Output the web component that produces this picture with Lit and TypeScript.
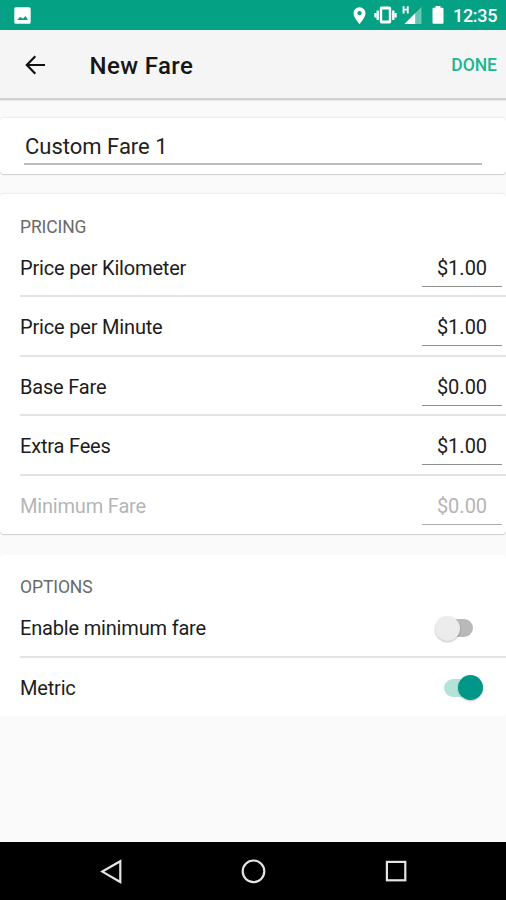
import { LitElement, html, css, svg } from "lit";
import { customElement, property } from "lit/decorators.js";
import { classMap } from "lit/directives/class-map.js";

@customElement("status-bar")
class StatusBar extends LitElement {
  static styles = css`
    :host { display: flex; height: 30px; background: #04a185; color: #fff; align-items: center; }
    svg { display: block; fill: #fff; flex: none; }
    .photo { margin-left: 14px; margin-top: 1px; }
    .gap { flex: 1; }
    .pin { margin-right: 8px; }
    .vibrate { margin-right: 5px; }
    .signal { margin-right: 10px; }
    .battery { margin-right: 9px; }
    .time { width: 44px; margin-right: 9px; font-size: 18px; font-weight: 500; line-height: 30px; padding-top: 2px; white-space: nowrap; letter-spacing: -0.3px; }
  `;
  render() {
    return html`
      <svg class="photo" width="17" height="17" viewBox="0 0 17 17">
        <path fill-rule="evenodd" d="M1.8.3h13.4q1.5 0 1.5 1.5v13.4q0 1.5-1.5 1.5H1.8Q.3 16.700.3 15.200V1.800Q.3.300 1.800.3ZM3.200 13H14L11.400 8.900 9 11.700 8 10.800 6 10.100Z" />
      </svg>
      <div class="gap"></div>
      <svg class="pin" width="13" height="17" viewBox="0 0 13 17">
        <path fill-rule="evenodd" d="M6.500.2A5.900 5.900 0 0 0 .5 6.200C.5 10.600 6.500 17 6.500 17S12.500 10.600 12.500 6.200A5.900 5.900 0 0 0 6.500.2ZM6.500 3.900A2.200 2.200 0 1 1 6.500 8.300 2.200 2.200 0 0 1 6.500 3.900Z" />
      </svg>
      <svg class="vibrate" width="23" height="18" viewBox="0 0 23 18">
        <path fill-rule="evenodd" d="M7.500 0.500h8q1.700 0 1.700 1.700v13.600q0 1.700-1.700 1.700h-8q-1.700 0-1.700-1.700V2.200q0-1.700 1.700-1.700ZM8.200 3.500v11h6.600v-11Z" />
        <path d="M2.500 4.500h2.400v9.500H2.500ZM18.100 4.500h2.400v9.500h-2.400ZM.3 7h2v4.500h-2ZM20.700 7h2v4.500h-2Z" />
      </svg>
      <svg class="signal" width="20" height="20" viewBox="0 0 20 20">
        <path opacity=".4" d="M19.500 2v17H2.500Z" />
        <path d="M13.200 8.300V19H2.500Z" />
        <path d="M.6 1.200h1.900v2.500h2.300V1.200h1.900v7.300H4.800V5.400H2.500v3.100H.6Z" />
      </svg>
      <svg class="battery" width="12" height="18" viewBox="0 0 12 18">
        <path d="M3.500 0h5v1.700h2q1 0 1 1v14q0 1-1 1h-9q-1 0-1-1v-14q0-1 1-1h2Z" />
      </svg>
      <span class="time">12:35</span>
    `;
  }
}

@customElement("app-bar")
class AppBar extends LitElement {
  static styles = css`
    :host { display: flex; height: 68px; background: #f5f5f5; align-items: center; border-bottom: 2px solid #d0d0d0; box-shadow: 0 1px 1px #e9e9e9; }
    svg { margin-left: 25px; margin-top: 1px; }
    .title { margin-left: 43.500px; padding-top: 3px; flex: 1; font-size: 24px; font-weight: 500; letter-spacing: 0.4px; color: #161616; }
    .done { margin-right: 9px; padding-top: 2px; font-size: 17.500px; font-weight: 500; color: #1db691; }
  `;
  render() {
    return html`
      <svg width="21" height="20" viewBox="0 0 21 20" fill="none" stroke="#111" stroke-width="2.200">
        <path d="M20 10H2.500M10.300 1.200 1.800 10l8.500 8.800" />
      </svg>
      <span class="title">New Fare</span>
      <span class="done">DONE</span>
    `;
  }
}

@customElement("fare-row")
class FareRow extends LitElement {
  @property() label = "";
  @property() value = "";
  @property({ type: Boolean }) off = false;
  @property({ type: Boolean }) last = false;
  static styles = css`
    :host { display: block; }
    .row { box-sizing: border-box; height: 59.500px; margin-left: 20px; display: flex; justify-content: space-between; align-items: center; border-bottom: 2px solid #e4e4e4; color: #1c1c1c; font-size: 20px; }
    .last { border-bottom-color: transparent; }
    .off { color: #b5b5b5; }
    .label { padding-top: 3px; white-space: nowrap; letter-spacing: -0.18px; }
    .field { box-sizing: border-box; width: 80px; height: 39px; margin: 10px 4px 0 0; padding-top: 1px; line-height: 38px; text-align: center; border-bottom: 1.500px solid #8f8f8f; align-self: flex-start; }
    .off .field { border-bottom-color: #adadad; }
  `;
  render() {
    return html`<div class=${classMap({ row: true, off: this.off, last: this.last })}>
      <span class="label">${this.label}</span>
      ${this.value ? html`<span class="field">${this.value}</span>` : html`<slot></slot>`}
    </div>`;
  }
}

@customElement("toggle-switch")
class ToggleSwitch extends LitElement {
  @property({ type: Boolean }) on = false;
  static styles = css`
    :host { display: block; width: 50px; margin-right: 22px; }
    .switch { display: flex; align-items: center; height: 26px; margin-top: 3px; }
    .track { width: 29px; height: 18px; margin-left: 10px; border-radius: 9px; background: #b9b9b9; }
    .thumb { flex: none; width: 25px; height: 25px; margin-left: -38px; border-radius: 50%; background: #ececec; box-shadow: 0 1px 2px rgba(0, 0, 0, 0.25); }
    .on .track { background: #b4e4d8; }
    .on .thumb { margin-left: -15px; background: #009688; }
  `;
  render() {
    return html`<div class=${classMap({ switch: true, on: this.on })}>
      <div class="track"></div><div class="thumb"></div>
    </div>`;
  }
}

@customElement("nav-bar")
class NavBar extends LitElement {
  static styles = css`
    :host { display: flex; height: 58px; background: #000; align-items: center; justify-content: center; gap: 118px; }
    svg { fill: none; stroke: #e4e4e4; stroke-width: 2.200; }
  `;
  render() {
    const shapes = [
      svg`<path d="M22.300 2.200v20.800L4.300 12.600Z" />`,
      svg`<circle cx="12.500" cy="12.300" r="10.800" />`,
      svg`<rect x="2.900" y="2.900" width="18.400" height="18.400" />`,
    ];
    return shapes.map((s) => html`<svg width="25" height="25" viewBox="0 0 25 25">${s}</svg>`);
  }
}

@customElement("app-root")
class AppRoot extends LitElement {
  static styles = css`
    :host { display: flex; flex-direction: column; height: 900px; background: #fafafa; font-family: Roboto, sans-serif; overflow: hidden; }
    .content { flex: 1; padding-top: 18px; }
    .card { box-sizing: border-box; background: #fff; border-radius: 4px; box-shadow: 0 -1px 1px #ececec, 0 1px 1px #cfcfcf; }
    .name { height: 56px; padding: 9px 24px 0; }
    .input { box-sizing: border-box; height: 38px; padding: 1px 0 0 1px; line-height: 38px; font-size: 22px; color: #222; border-bottom: 2px solid #bdbdbd; }
    .pricing { height: 340px; margin-top: 20px; padding-top: 43.700px; }
    .options { height: 161px; margin-top: 21px; padding-top: 43px; box-shadow: none; }
    .heading { height: 20px; margin: -21px 0 1px 20px; font-size: 17.500px; line-height: 20px; letter-spacing: -0.1px; color: #6a6a6a; }
  `;
  render() {
    return html`
      <status-bar></status-bar>
      <app-bar></app-bar>
      <div class="content">
        <div class="card name"><div class="input">Custom Fare 1</div></div>
        <div class="card pricing">
          <div class="heading">PRICING</div>
          <fare-row label="Price per Kilometer" value="$1.00"></fare-row>
          <fare-row label="Price per Minute" value="$1.00"></fare-row>
          <fare-row label="Base Fare" value="$0.00"></fare-row>
          <fare-row label="Extra Fees" value="$1.00"></fare-row>
          <fare-row label="Minimum Fare" value="$0.00" off last></fare-row>
        </div>
        <div class="card options">
          <div class="heading">OPTIONS</div>
          <fare-row label="Enable minimum fare"><toggle-switch></toggle-switch></fare-row>
          <fare-row label="Metric" last><toggle-switch on></toggle-switch></fare-row>
        </div>
      </div>
      <nav-bar></nav-bar>
    `;
  }
}
